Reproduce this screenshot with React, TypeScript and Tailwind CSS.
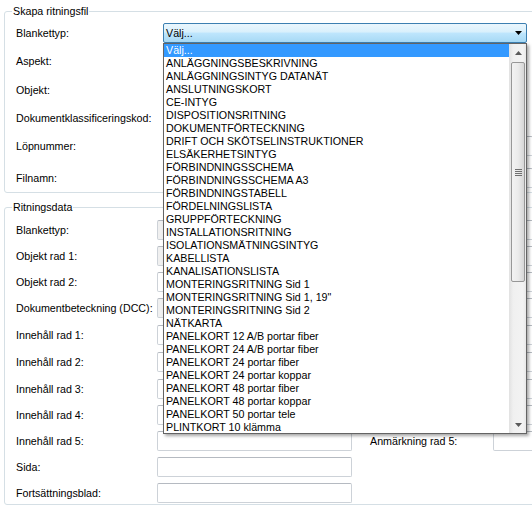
import { ReactNode } from "react";

const items = [
  "Välj...",
  "ANLÄGGNINGSBESKRIVNING",
  "ANLÄGGNINGSINTYG DATANÄT",
  "ANSLUTNINGSKORT",
  "CE-INTYG",
  "DISPOSITIONSRITNING",
  "DOKUMENTFÖRTECKNING",
  "DRIFT OCH SKÖTSELINSTRUKTIONER",
  "ELSÄKERHETSINTYG",
  "FÖRBINDNINGSSCHEMA",
  "FÖRBINDNINGSSCHEMA A3",
  "FÖRBINDNINGSTABELL",
  "FÖRDELNINGSLISTA",
  "GRUPPFÖRTECKNING",
  "INSTALLATIONSRITNING",
  "ISOLATIONSMÄTNINGSINTYG",
  "KABELLISTA",
  "KANALISATIONSLISTA",
  "MONTERINGSRITNING Sid 1",
  'MONTERINGSRITNING Sid 1, 19"',
  "MONTERINGSRITNING Sid 2",
  "NÄTKARTA",
  "PANELKORT 12 A/B portar fiber",
  "PANELKORT 24 A/B portar fiber",
  "PANELKORT 24 portar fiber",
  "PANELKORT 24 portar koppar",
  "PANELKORT 48 portar fiber",
  "PANELKORT 48 portar koppar",
  "PANELKORT 50 portar tele",
  "PLINTKORT 10 klämma",
];

// rader i "Skapa ritningsfil" (mt = avstånd till föregående rad)
const topRows = [
  { label: "Aspekt:", mt: "mt-[8px]", w: "w-[364px]" },
  { label: "Objekt:", mt: "mt-[9px]", w: "w-[364px]" },
  { label: "Dokumentklassificeringskod:", mt: "mt-[8px]", w: "w-[364px]" },
  { label: "Löpnummer:", mt: "mt-[8px]", w: "w-[370px]" },
  { label: "Filnamn:", mt: "mt-[12px]", w: "w-[370px]" },
];

// rader i "Ritningsdata"
const dataRows = [
  { label: "Blankettyp:", mt: "mt-[6px]", gray: true, right: "" },
  { label: "Objekt rad 1:", mt: "mt-[6px]", gray: true, right: "" },
  { label: "Objekt rad 2:", mt: "mt-[6px]", gray: false, right: "" },
  { label: "Dokumentbeteckning (DCC):", mt: "mt-[6px]", gray: true, right: "" },
  { label: "Innehåll rad 1:", mt: "mt-[7px]", gray: false, right: "Anmärkning rad 1:" },
  { label: "Innehåll rad 2:", mt: "mt-[7px]", gray: false, right: "Anmärkning rad 2:" },
  { label: "Innehåll rad 3:", mt: "mt-[7px]", gray: false, right: "Anmärkning rad 3:" },
  { label: "Innehåll rad 4:", mt: "mt-[6px]", gray: false, right: "Anmärkning rad 4:" },
  { label: "Innehåll rad 5:", mt: "mt-[6px]", gray: false, right: "Anmärkning rad 5:" },
  { label: "Sida:", mt: "mt-[6px]", gray: false, right: null },
  { label: "Fortsättningsblad:", mt: "mt-[6px]", gray: false, right: null },
];

const TextBox = ({ gray, className }: { gray?: boolean; className: string }) => (
  <div
    className={`h-[20px] rounded-[2px] border border-[#cdd2d8] border-t-[#b5bac1] ${
      gray ? "bg-[#f0f0f0]" : "bg-white"
    } ${className}`}
  />
);

const GroupBox = ({ title, className, children }: { title: string; className: string; children: ReactNode }) => (
  <fieldset className={`ml-[4px] w-[560px] rounded-[3px] border border-[#d5dfe5] pl-[7px] ${className}`}>
    <legend className="px-[1px] leading-[13px]">{title}</legend>
    <div className="ml-[4px] flex flex-col">{children}</div>
  </fieldset>
);

const ArrowUp = () => (
  <svg width="7" height="4" viewBox="0 0 7 4">
    <path d="M0 4 L3.5 0 L7 4 Z" fill="#5a5a5a" />
  </svg>
);

const ArrowDown = () => (
  <svg width="7" height="4" viewBox="0 0 7 4">
    <path d="M0 0 L7 0 L3.5 4 Z" fill="#5a5a5a" />
  </svg>
);

export default function App() {
  return (
    <div className="relative h-[509px] w-[532px] overflow-hidden bg-white font-['Liberation_Sans',Arial,sans-serif] text-[10.7px] leading-[13px] text-black">
      {/* Skapa ritningsfil */}
      <GroupBox title="Skapa ritningsfil" className="mt-[5px] pb-[4px]">
        <div className="mt-[5px] flex h-[20px] items-center">
          <div className="w-[147px]">Blankettyp:</div>
          <div className="flex h-[20px] w-[364px] items-center rounded-[2px] border border-[#3c7fb1] bg-[linear-gradient(to_bottom,#eaf6fd_0%,#d9f0fc_45%,#bee6fd_50%,#a7d9f5_100%)] pl-[2px] pr-[4px]">
            <span className="flex-1">Välj...</span>
            <svg width="7" height="4" viewBox="0 0 7 4">
              <path d="M0 0 L7 0 L3.5 4 Z" fill="#000" />
            </svg>
          </div>
        </div>
        {topRows.map((r) => (
          <div key={r.label} className={`flex h-[20px] items-center ${r.mt}`}>
            <div className="w-[147px]">{r.label}</div>
            <TextBox className={r.w} />
          </div>
        ))}
      </GroupBox>

      {/* Ritningsdata */}
      <GroupBox title="Ritningsdata" className="mt-[8px] pb-[1px]">
        {dataRows.map((r) => (
          <div key={r.label} className={`flex h-[20px] items-center ${r.mt}`}>
            <div className="w-[141px]">{r.label}</div>
            <TextBox gray={r.gray} className="w-[195px]" />
            {r.right !== null && (
              <>
                <div className="ml-[18px] w-[123px]">{r.right}</div>
                <TextBox className="w-[80px]" />
              </>
            )}
          </div>
        ))}
      </GroupBox>

      {/* Öppen lista för Blankettyp */}
      <div className="absolute left-[163px] top-[43px] flex h-[391px] w-[364px] border border-[#646464] bg-white shadow-[2px_2px_3px_rgba(0,0,0,0.35)]">
        <div className="flex w-[345px] flex-col">
          {items.map((it, i) => (
            <div
              key={it}
              className={`h-[13px] whitespace-nowrap pl-[2px] leading-[13px] ${
                i === 0 ? "bg-[#3399ff] text-white" : ""
              }`}
            >
              {it}
            </div>
          ))}
        </div>
        <div className="flex w-[17px] flex-col border-l border-[#e3e3e3] bg-[linear-gradient(to_right,#e5e5e5,#f0f0f0_20%,#f3f3f3_80%,#e8e8e8)]">
          <div className="flex h-[17px] items-center justify-center">
            <ArrowUp />
          </div>
          <div className="mx-[1px] mt-[1px] flex h-[220px] items-center justify-center rounded-[2px] border border-[#979797] bg-[linear-gradient(to_right,#f2f2f2,#ebebeb_50%,#d6d6d6)]">
            <div className="flex flex-col gap-[1px]">
              <div className="h-[1px] w-[7px] bg-[#6f6f6f]" />
              <div className="h-[1px] w-[7px] bg-[#6f6f6f]" />
              <div className="h-[1px] w-[7px] bg-[#6f6f6f]" />
              <div className="h-[1px] w-[7px] bg-[#6f6f6f]" />
            </div>
          </div>
          <div className="flex-1" />
          <div className="flex h-[17px] items-center justify-center">
            <ArrowDown />
          </div>
        </div>
      </div>
    </div>
  );
}
